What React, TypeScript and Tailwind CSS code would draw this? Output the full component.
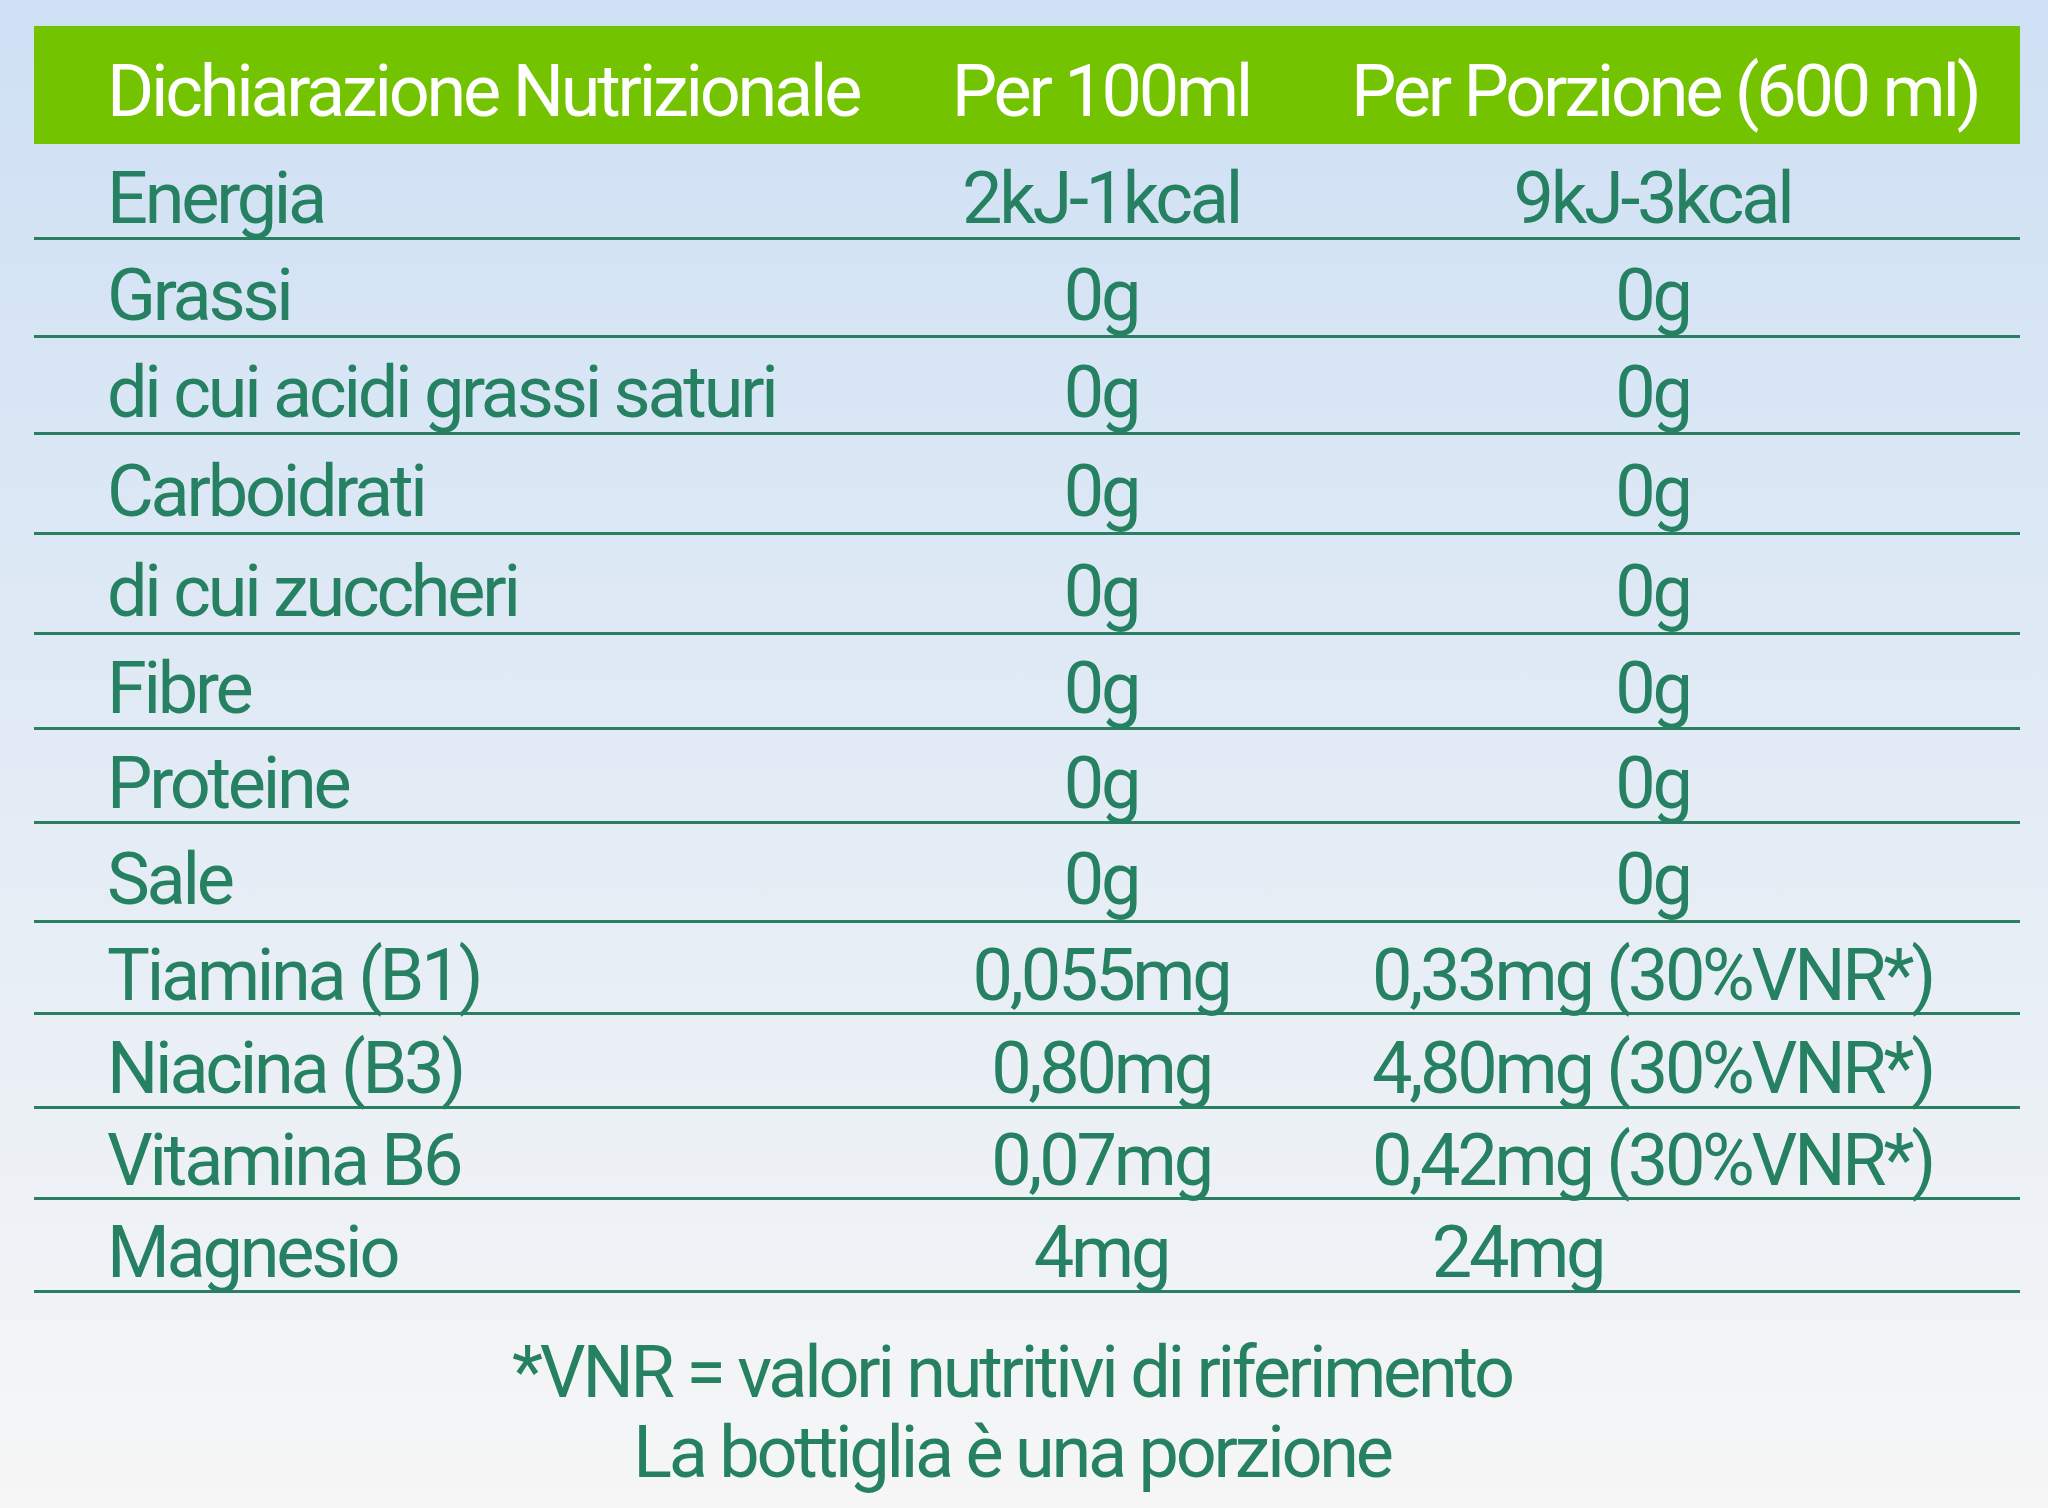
const rows: { label: string; per100: string; portion: string; h: number; portionClass?: string }[] = [
  { label: 'Energia', per100: '2kJ-1kcal', portion: '9kJ-3kcal', h: 96 },
  { label: 'Grassi', per100: '0g', portion: '0g', h: 98 },
  { label: 'di cui acidi grassi saturi', per100: '0g', portion: '0g', h: 97 },
  { label: 'Carboidrati', per100: '0g', portion: '0g', h: 100 },
  { label: 'di cui zuccheri', per100: '0g', portion: '0g', h: 100 },
  { label: 'Fibre', per100: '0g', portion: '0g', h: 95 },
  { label: 'Proteine', per100: '0g', portion: '0g', h: 94 },
  { label: 'Sale', per100: '0g', portion: '0g', h: 99 },
  { label: 'Tiamina (B1)', per100: '0,055mg', portion: '0,33mg (30%VNR*)', h: 92 },
  { label: 'Niacina (B3)', per100: '0,80mg', portion: '4,80mg (30%VNR*)', h: 94 },
  { label: 'Vitamina B6', per100: '0,07mg', portion: '0,42mg (30%VNR*)', h: 91 },
  { label: 'Magnesio', per100: '4mg', portion: '24mg', h: 93, portionClass: 'mr-[270px]' },
]

const font = { fontFamily: '"Roboto", "Liberation Sans", sans-serif' }

export default function App() {
  return (
    <div
      className="w-[2048px] h-[1508px] bg-gradient-to-b from-[#cee0f4] to-[#f6f6f6] pl-[34px] pr-[28px] pt-[26px] text-[#258161] text-[72px] leading-none tracking-[-0.045em] whitespace-nowrap"
      style={font}
    >
      <div className="grid grid-cols-[817px_500px_1fr] h-[118px] items-center bg-[#73c300] text-white">
        <div className="pl-[73px] pt-[14px]">Dichiarazione Nutrizionale</div>
        <div className="text-center pt-[14px]">Per 100ml</div>
        <div className="text-center pt-[14px] pr-[66px]">Per Porzione (600 ml)</div>
      </div>
      {rows.map((r) => (
        <div
          key={r.label}
          className="grid grid-cols-[817px_500px_1fr] items-center border-b-[3px] border-[#2a7f60]"
          style={{ height: r.h }}
        >
          <div className="pl-[73px] pt-[16px]">{r.label}</div>
          <div className="text-center pt-[16px]">{r.per100}</div>
          <div className={`text-center pt-[16px] pr-[66px] ${r.portionClass ?? ''}`}>{r.portion}</div>
        </div>
      ))}
      <div className="flex flex-col items-center pt-[40px] pr-[30px] leading-[80px]">
        <p>*VNR = valori nutritivi di riferimento</p>
        <p>La bottiglia è una porzione</p>
      </div>
    </div>
  )
}
